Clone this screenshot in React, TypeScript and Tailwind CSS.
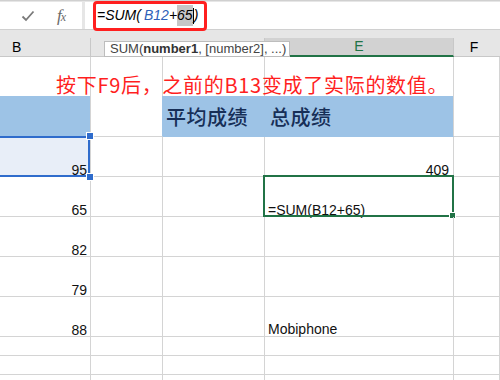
import React from 'react';

const line = 'border-[#d4d4d4]';
const widths = ['w-[91px]', 'w-[72px]', 'w-[102px]', 'w-[189px]', 'flex-1'];
const cjk = "font-['Noto_Sans_CJK_SC',sans-serif]";

function Cell({ i, className = '', children }: { i: number; className?: string; children?: React.ReactNode }) {
  return <div className={`${widths[i]} shrink-0 border-r border-b ${className}`}>{children}</div>;
}

function NumRow({ value, e }: { value?: string; e?: React.ReactNode }) {
  return (
    <div className="flex h-[40px]">
      <Cell i={0} className={`${line} flex items-end justify-end pr-[3px] text-[14px] leading-[12px] text-[#111]`}>{value}</Cell>
      <Cell i={1} className={line} />
      <Cell i={2} className={line} />
      <Cell i={3} className={`${line} relative`}>{e}</Cell>
      <Cell i={4} className={line} />
    </div>
  );
}

function ThinRow({ h }: { h: string }) {
  return (
    <div className={`flex ${h}`}>
      {[0, 1, 2, 3, 4].map(i => (
        <Cell key={i} i={i} className={line} />
      ))}
    </div>
  );
}

export default function App() {
  return (
    <div className="w-[500px] h-[380px] overflow-hidden bg-white font-['Liberation_Sans',Arial,sans-serif] text-black">
      {/* formula bar */}
      <div className="h-[30px] bg-[#e6e6e6] border-t border-[#d0d0d0] pt-[1px] flex border-b">
        <div className="w-[82px] h-[27px] bg-white flex items-center">
          <svg width="14" height="12" viewBox="0 0 14 12" className="ml-[21px]">
            <path d="M1.5 6.5 L5 10 L12.5 1.5" fill="none" stroke="#7a7a7a" strokeWidth="1.8" />
          </svg>
          <span className="ml-[22px] text-[17px] italic text-[#6a6a6a] font-['Liberation_Serif',serif] tracking-[-1px]">
            f<span className="text-[12px]">x</span>
          </span>
        </div>
        <div className="ml-[3px] flex-1 h-[27px] bg-white relative flex items-center">
          <div className="ml-[12px] text-[14px] italic flex items-center">
            <span>=SUM(</span>
            <span className="ml-[3px] text-[#2e5fb8]">B12</span>
            <span>+</span>
            <span className="bg-[#c6c6c6]">65</span>
            <span className="w-[1px] h-[16px] bg-black" />
            <span>)</span>
          </div>
          <div className="absolute left-[8px] top-[-1px] w-[114px] h-[30px] border-[3px] border-[#ff1f1f] rounded-[4px]" />
        </div>
      </div>

      {/* column headers */}
      <div className="h-[8px] bg-[#e6e6e6]" />
      <div className="flex h-[19px] bg-[#e6e6e6] text-[14px]">
        <Cell i={0} className="border-[#c8c8c8] flex items-center pl-[12px]">B</Cell>
        <Cell i={1} className="border-[#c8c8c8] border-r-transparent" />
        <Cell i={2} className="border-[#c8c8c8]" />
        <Cell i={3} className="border-[#c8c8c8] bg-[#d2d2d2] border-b-2 border-b-[#217346] flex items-center justify-center text-[#217346]">
          E
        </Cell>
        <Cell i={4} className="border-[#c8c8c8] border-r-0 flex items-center justify-center pr-[6px]">F</Cell>
      </div>

      {/* annotation row */}
      <div className="flex h-[39px] relative">
        {[0, 1, 2, 3, 4].map(i => (
          <div key={i} className={`${widths[i]} shrink-0 border-r ${line}`} />
        ))}
        <div className={`absolute left-[56px] top-[17px] text-[20px] leading-[22px] tracking-[0.7px] text-[#ff1f1f] whitespace-nowrap ${cjk}`}>
          按下F9后，之前的B13变成了实际的数值。
        </div>
        <div className="absolute left-[104px] top-[-16px] w-[186px] h-[16px] bg-white border border-[#bdbdbd] text-[13px] leading-[14px] text-[#444] pl-[5px] font-['Liberation_Sans',sans-serif] whitespace-nowrap">
          SUM(<b className="text-[#333]">number1</b>, [number2], ...)
        </div>
      </div>

      {/* blue header row */}
      <div className={`flex h-[41px] text-[20px] font-medium tracking-[0.5px] text-[#172f57] ${cjk}`}>
        <Cell i={0} className="bg-[#9dc3e6] border-[#9dc3e6] border-r-[#d4d4d4]" />
        <Cell i={1} className={`${line} border-r-[#9dc3e6]`} />
        <Cell i={2} className="bg-[#9dc3e6] border-[#9dc3e6] flex items-center pl-[3px] pt-[1px]">平均成绩</Cell>
        <Cell i={3} className="bg-[#9dc3e6] border-[#9dc3e6] border-r-[#d4d4d4] flex items-center pl-[5px] pt-[1px]">总成绩</Cell>
        <Cell i={4} className={line} />
      </div>

      {/* row with selected B cell */}
      <div className="flex h-[40px]">
        <Cell i={0} className={`${line} relative bg-[#e8eef8] flex items-end justify-end pr-[3px] text-[14px] leading-[12px] text-[#111]`}>
          95
          <div className="absolute top-[-1px] left-0 right-0 bottom-[-1px] border-2 border-l-0 border-[#2f6ccc]" />
          <div className="absolute top-[-4px] right-[-3px] w-[6px] h-[6px] bg-[#2f6ccc] outline outline-1 outline-white" />
          <div className="absolute bottom-[-4px] right-[-3px] w-[6px] h-[6px] bg-[#2f6ccc] outline outline-1 outline-white" />
        </Cell>
        <Cell i={1} className={line} />
        <Cell i={2} className={line} />
        <Cell i={3} className={`${line} flex items-end justify-end pr-[4px] text-[14px] leading-[12px] text-[#111]`}>409</Cell>
        <Cell i={4} className={line} />
      </div>

      <NumRow
        value="65"
        e={
          <>
            <div className="absolute inset-0 flex items-end pl-[3px] text-[14px] leading-[12px] text-[#111]">=SUM(B12+65)</div>
            <div className="absolute top-[-2px] left-[-2px] right-[-1px] bottom-[-1px] border-2 border-[#217346]" />
            <div className="absolute bottom-[-2px] right-[-2px] w-[5px] h-[5px] bg-[#217346] outline outline-1 outline-white" />
          </>
        }
      />
      <NumRow value="82" />
      <NumRow value="79" />
      <NumRow
        value="88"
        e={<div className="absolute inset-0 flex items-end pl-[3px] pb-[1px] text-[14px] leading-[12px] text-[#111]">Mobiphone</div>}
      />
      <ThinRow h="h-[19px]" />
      <ThinRow h="h-[19px]" />
      <ThinRow h="h-[19px]" />
    </div>
  );
}
